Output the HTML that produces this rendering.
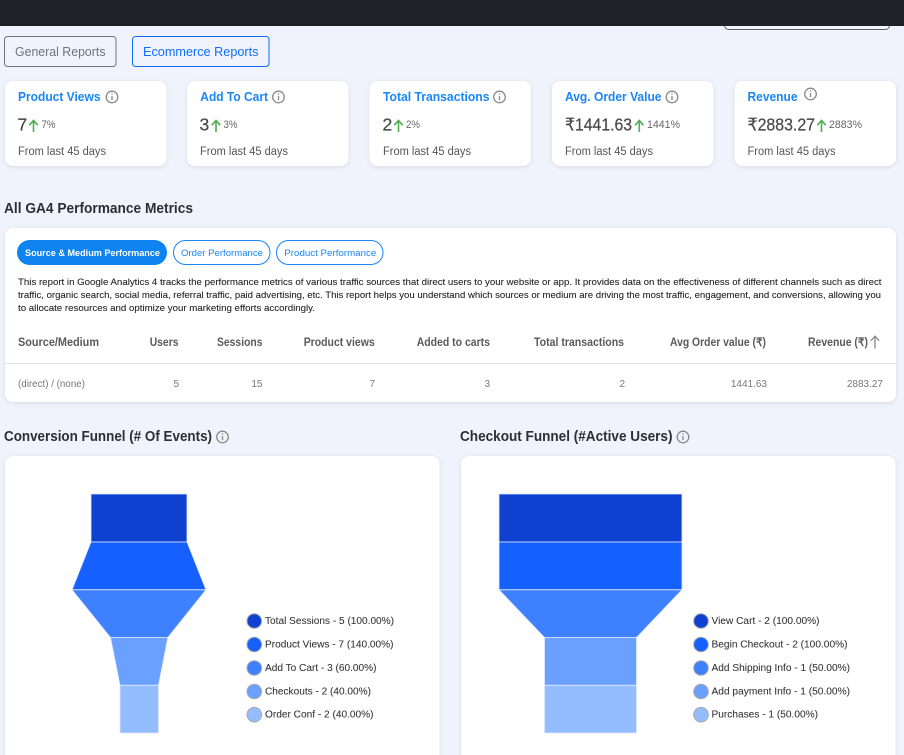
<!DOCTYPE html>
<html lang="en">
<head>
<meta charset="utf-8">
<title>GA4 Ecommerce Reports</title>
<style>
html,body{margin:0;padding:0;width:904px;height:755px;overflow:hidden;background:#f0f3fb}
svg{display:block;font-family:"Liberation Sans",Arial,sans-serif;filter:blur(.3px)}
.card{fill:#fff;filter:drop-shadow(0 1px 2px rgba(60,70,100,.14))}
.t{font-size:13px;font-weight:700;fill:#1a86f5}
.v{font-size:17.500px;fill:#4a4a4a;stroke:#4a4a4a;stroke-width:.25}
.p{font-size:11px;fill:#666}
.f{font-size:11.500px;fill:#555}
.h{font-size:14.500px;font-weight:700;fill:#2b2f33}
.d{font-size:9.600px;fill:#1e1e1e;stroke:#1e1e1e;stroke-width:.08}
.th{font-size:11.500px;font-weight:700;fill:#5a5a5a}
.td{font-size:10px;fill:#777}
.l{font-size:10px;fill:#333;stroke:#333;stroke-width:.06}
.ar{fill:none;stroke:#4caf50;stroke-width:1.600}
.i circle{fill:none;stroke:#8a8a8a;stroke-width:1.300}
.i path{fill:none;stroke:#8a8a8a;stroke-width:1.300}
.seg{stroke:#dfe9ff;stroke-width:.8}
.lg{stroke:#a9a9a9;stroke-width:1}
</style>
</head>
<body>
<svg width="904" height="755" viewBox="0 0 904 755" xmlns="http://www.w3.org/2000/svg">
<defs>
<g id="info" class="i"><circle cx="0" cy="0" r="5.800"/><path d="M0 -1V3.200M0 -3.500V-2.300"/></g>
</defs>
<rect width="904" height="755" fill="#f0f3fb"/>

<rect x="724.500" y="10" width="165" height="19.500" rx="4" fill="#f4f6fc" stroke="#5c6066"/>
<rect width="904" height="26" fill="#1e2227"/>

<rect x="4.500" y="36.500" width="111.500" height="30" rx="3" fill="none" stroke="#6c757d"/>
<text x="15" y="56" font-size="13" fill="#6c757d" textLength="90.500" lengthAdjust="spacingAndGlyphs">General Reports</text>
<rect x="132.500" y="36.500" width="136.500" height="30" rx="3" fill="none" stroke="#0d6efd"/>
<text x="143" y="56" font-size="13" fill="#0d6efd" textLength="115.500" lengthAdjust="spacingAndGlyphs">Ecommerce Reports</text>

<!-- stat cards -->
<rect class="card" x="5" y="81" width="161.500" height="85" rx="8"/>
<rect class="card" x="187" y="81" width="161.500" height="85" rx="8"/>
<rect class="card" x="369.500" y="81" width="161.500" height="85" rx="8"/>
<rect class="card" x="552" y="81" width="161.500" height="85" rx="8"/>
<rect class="card" x="734.500" y="81" width="161.500" height="85" rx="8"/>

<text class="t" x="18" y="101" textLength="82.500" lengthAdjust="spacingAndGlyphs">Product Views</text>
<text class="t" x="200.300" y="101" textLength="67.700" lengthAdjust="spacingAndGlyphs">Add To Cart</text>
<text class="t" x="383" y="101" textLength="106.500" lengthAdjust="spacingAndGlyphs">Total Transactions</text>
<text class="t" x="565" y="101" textLength="96.500" lengthAdjust="spacingAndGlyphs">Avg. Order Value</text>
<text class="t" x="747.500" y="101" textLength="50" lengthAdjust="spacingAndGlyphs">Revenue</text>
<use href="#info" x="112" y="97"/>
<use href="#info" x="278.500" y="97"/>
<use href="#info" x="499.500" y="97"/>
<use href="#info" x="672" y="97"/>
<use href="#info" x="810.500" y="94"/>

<text class="v" x="17.500" y="130.500">7</text>
<text class="v" x="199.500" y="130.500">3</text>
<text class="v" x="382.500" y="130.500">2</text>
<text class="v" x="565" y="130.500" textLength="67" lengthAdjust="spacingAndGlyphs">₹1441.63</text>
<text class="v" x="747.500" y="130.500" textLength="67.500" lengthAdjust="spacingAndGlyphs">₹2883.27</text>

<path class="ar" d="M33.500 132V120.500M29.300 125.200l4.200-4.700 4.200 4.700"/>
<path class="ar" d="M216 132V120.500M211.800 125.200l4.200-4.700 4.200 4.700"/>
<path class="ar" d="M398.500 132V120.500M394.300 125.200l4.200-4.700 4.200 4.700"/>
<path class="ar" d="M639.300 132V120.500M635.100 125.200l4.200-4.700 4.200 4.700"/>
<path class="ar" d="M821.500 132V120.500M817.300 125.200l4.200-4.700 4.200 4.700"/>

<text class="p" x="41.500" y="128" textLength="14" lengthAdjust="spacingAndGlyphs">7%</text>
<text class="p" x="223.500" y="128" textLength="14" lengthAdjust="spacingAndGlyphs">3%</text>
<text class="p" x="406" y="128" textLength="14" lengthAdjust="spacingAndGlyphs">2%</text>
<text class="p" x="647" y="128" textLength="33" lengthAdjust="spacingAndGlyphs">1441%</text>
<text class="p" x="829" y="128" textLength="33" lengthAdjust="spacingAndGlyphs">2883%</text>

<text class="f" x="18" y="155" textLength="88" lengthAdjust="spacingAndGlyphs">From last 45 days</text>
<text class="f" x="200" y="155" textLength="88" lengthAdjust="spacingAndGlyphs">From last 45 days</text>
<text class="f" x="383" y="155" textLength="88" lengthAdjust="spacingAndGlyphs">From last 45 days</text>
<text class="f" x="565" y="155" textLength="88" lengthAdjust="spacingAndGlyphs">From last 45 days</text>
<text class="f" x="747.500" y="155" textLength="88" lengthAdjust="spacingAndGlyphs">From last 45 days</text>

<text class="h" x="4" y="213" textLength="189" lengthAdjust="spacingAndGlyphs">All GA4 Performance Metrics</text>

<!-- table card -->
<rect class="card" x="5" y="228" width="891" height="174" rx="8"/>
<rect x="17" y="240" width="150" height="25" rx="12.500" fill="#0f84f0"/>
<text x="25" y="256" font-size="9.500" font-weight="700" fill="#fff" textLength="135" lengthAdjust="spacingAndGlyphs">Source &amp; Medium Performance</text>
<rect x="173.500" y="240.500" width="96.500" height="24" rx="12" fill="#fff" stroke="#1a86f5"/>
<text x="181" y="256" font-size="9.500" fill="#1a86f5" textLength="82" lengthAdjust="spacingAndGlyphs">Order Performance</text>
<rect x="276.500" y="240.500" width="106.500" height="24" rx="12" fill="#fff" stroke="#1a86f5"/>
<text x="284.300" y="256" font-size="9.500" fill="#1a86f5" textLength="92" lengthAdjust="spacingAndGlyphs">Product Performance</text>

<text class="d" x="18" y="285" textLength="863.500" lengthAdjust="spacingAndGlyphs">This report in Google Analytics 4 tracks the performance metrics of various traffic sources that direct users to your website or app. It provides data on the effectiveness of different channels such as direct</text>
<text class="d" x="18" y="298" textLength="863" lengthAdjust="spacingAndGlyphs">traffic, organic search, social media, referral traffic, paid advertising, etc. This report helps you understand which sources or medium are driving the most traffic, engagement, and conversions, allowing you</text>
<text class="d" x="18" y="311" textLength="297" lengthAdjust="spacingAndGlyphs">to allocate resources and optimize your marketing efforts accordingly.</text>

<text class="th" x="18" y="346" textLength="81" lengthAdjust="spacingAndGlyphs">Source/Medium</text>
<text class="th" x="149.700" y="346" textLength="28.800" lengthAdjust="spacingAndGlyphs">Users</text>
<text class="th" x="217" y="346" textLength="45.500" lengthAdjust="spacingAndGlyphs">Sessions</text>
<text class="th" x="303.700" y="346" textLength="71" lengthAdjust="spacingAndGlyphs">Product views</text>
<text class="th" x="416.700" y="346" textLength="73.300" lengthAdjust="spacingAndGlyphs">Added to carts</text>
<text class="th" x="534" y="346" textLength="90" lengthAdjust="spacingAndGlyphs">Total transactions</text>
<text class="th" x="670" y="346" textLength="96" lengthAdjust="spacingAndGlyphs">Avg Order value (₹)</text>
<text class="th" x="808" y="346" textLength="60" lengthAdjust="spacingAndGlyphs">Revenue (₹)</text>
<path d="M875 348.500V336.500M870.800 340.800l4.200-4.600 4.200 4.600" fill="none" stroke="#8a8a8a" stroke-width="1.300"/>

<rect x="5" y="363" width="891" height="1" fill="#e3e3e6"/>

<text class="td" x="18" y="387" textLength="67" lengthAdjust="spacingAndGlyphs">(direct) / (none)</text>
<text class="td" x="179" y="387" text-anchor="end">5</text>
<text class="td" x="262.500" y="387" text-anchor="end">15</text>
<text class="td" x="375" y="387" text-anchor="end">7</text>
<text class="td" x="490" y="387" text-anchor="end">3</text>
<text class="td" x="625" y="387" text-anchor="end">2</text>
<text class="td" x="767" y="387" text-anchor="end">1441.63</text>
<text class="td" x="883" y="387" text-anchor="end">2883.27</text>

<!-- funnel headings -->
<text class="h" x="4" y="441" textLength="208" lengthAdjust="spacingAndGlyphs">Conversion Funnel (# Of Events)</text>
<use href="#info" x="222.500" y="437"/>
<text class="h" x="460" y="441" textLength="212.500" lengthAdjust="spacingAndGlyphs">Checkout Funnel (#Active Users)</text>
<use href="#info" x="683" y="437"/>

<rect class="card" x="5" y="456" width="434.500" height="320" rx="8"/>
<rect class="card" x="461" y="456" width="434.500" height="320" rx="8"/>

<!-- funnel 1 -->
<polygon class="seg" points="91,494 187,494 187,542 91,542" fill="#0f40d0"/>
<polygon class="seg" points="91,542 187,542 206,589.800 72,589.800" fill="#1660ff"/>
<polygon class="seg" points="72,589.800 206,589.800 167.800,637.500 110.500,637.500" fill="#3f80ff"/>
<polygon class="seg" points="110.500,637.500 167.800,637.500 158.500,685.300 120,685.300" fill="#6aa0ff"/>
<polygon class="seg" points="120,685.300 158.500,685.300 158.500,733 120,733" fill="#94bdff"/>
<!-- funnel 2 -->
<polygon class="seg" points="499,494 682,494 682,542 499,542" fill="#0f40d0"/>
<polygon class="seg" points="499,542 682,542 682,589.800 499,589.800" fill="#1660ff"/>
<polygon class="seg" points="499,589.800 682,589.800 636.500,637.500 544.500,637.500" fill="#3f80ff"/>
<polygon class="seg" points="544.500,637.500 636.500,637.500 636.500,685.300 544.500,685.300" fill="#6aa0ff"/>
<polygon class="seg" points="544.500,685.300 636.500,685.300 636.500,733 544.500,733" fill="#94bdff"/>

<!-- legends -->
<circle class="lg" cx="254.300" cy="621" r="7.300" fill="#0f40d0"/>
<circle class="lg" cx="254.300" cy="644.500" r="7.300" fill="#1660ff"/>
<circle class="lg" cx="254.300" cy="668" r="7.300" fill="#3f80ff"/>
<circle class="lg" cx="254.300" cy="691.500" r="7.300" fill="#6aa0ff"/>
<circle class="lg" cx="254.300" cy="714.700" r="7.300" fill="#94bdff"/>
<text class="l" x="265" y="624" textLength="129" lengthAdjust="spacingAndGlyphs">Total Sessions - 5 (100.00%)</text>
<text class="l" x="265" y="647.500" textLength="128.500" lengthAdjust="spacingAndGlyphs">Product Views - 7 (140.00%)</text>
<text class="l" x="265" y="671" textLength="111.500" lengthAdjust="spacingAndGlyphs">Add To Cart - 3 (60.00%)</text>
<text class="l" x="265" y="694.500" textLength="106" lengthAdjust="spacingAndGlyphs">Checkouts - 2 (40.00%)</text>
<text class="l" x="265" y="717.700" textLength="108.500" lengthAdjust="spacingAndGlyphs">Order Conf - 2 (40.00%)</text>

<circle class="lg" cx="701" cy="621" r="7.300" fill="#0f40d0"/>
<circle class="lg" cx="701" cy="644.500" r="7.300" fill="#1660ff"/>
<circle class="lg" cx="701" cy="668" r="7.300" fill="#3f80ff"/>
<circle class="lg" cx="701" cy="691.500" r="7.300" fill="#6aa0ff"/>
<circle class="lg" cx="701" cy="714.700" r="7.300" fill="#94bdff"/>
<text class="l" x="711.500" y="624" textLength="108" lengthAdjust="spacingAndGlyphs">View Cart - 2 (100.00%)</text>
<text class="l" x="711.500" y="647.500" textLength="136" lengthAdjust="spacingAndGlyphs">Begin Checkout - 2 (100.00%)</text>
<text class="l" x="711.500" y="671" textLength="138.500" lengthAdjust="spacingAndGlyphs">Add Shipping Info - 1 (50.00%)</text>
<text class="l" x="711.500" y="694.500" textLength="138.500" lengthAdjust="spacingAndGlyphs">Add payment Info - 1 (50.00%)</text>
<text class="l" x="711.500" y="717.700" textLength="106.500" lengthAdjust="spacingAndGlyphs">Purchases - 1 (50.00%)</text>
</svg>
</body>
</html>
